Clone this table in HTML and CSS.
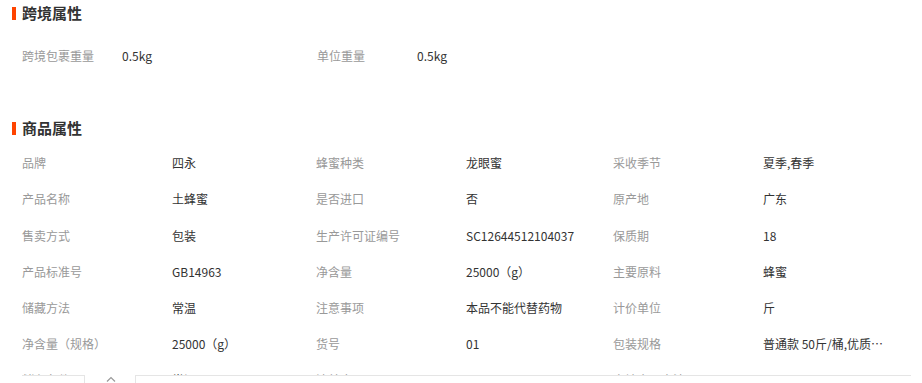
FILE: index.html
```html
<!DOCTYPE html>
<html lang="zh-CN">
<head>
<meta charset="utf-8">
<title>属性</title>
<link rel="stylesheet" href="styles.css">
</head>
<body>
<section class="sec sec-cross">
  <h2 class="sec-title">跨境属性</h2>
  <div class="grid grid-2">
    <div class="cell"><span class="lbl">跨境包裹重量</span><span class="val">0.5kg</span></div>
    <div class="cell"><span class="lbl">单位重量</span><span class="val">0.5kg</span></div>
  </div>
</section>
<section class="sec sec-goods">
  <h2 class="sec-title">商品属性</h2>
  <div class="grid grid-3">
    <div class="cell"><span class="lbl">品牌</span><span class="val">四永</span></div>
    <div class="cell"><span class="lbl">蜂蜜种类</span><span class="val">龙眼蜜</span></div>
    <div class="cell"><span class="lbl">采收季节</span><span class="val">夏季,春季</span></div>
    <div class="cell"><span class="lbl">产品名称</span><span class="val">土蜂蜜</span></div>
    <div class="cell"><span class="lbl">是否进口</span><span class="val">否</span></div>
    <div class="cell"><span class="lbl">原产地</span><span class="val">广东</span></div>
    <div class="cell"><span class="lbl">售卖方式</span><span class="val">包装</span></div>
    <div class="cell"><span class="lbl">生产许可证编号</span><span class="val">SC12644512104037</span></div>
    <div class="cell"><span class="lbl">保质期</span><span class="val">18</span></div>
    <div class="cell"><span class="lbl">产品标准号</span><span class="val">GB14963</span></div>
    <div class="cell"><span class="lbl">净含量</span><span class="val">25000（g）</span></div>
    <div class="cell"><span class="lbl">主要原料</span><span class="val">蜂蜜</span></div>
    <div class="cell"><span class="lbl">储藏方法</span><span class="val">常温</span></div>
    <div class="cell"><span class="lbl">注意事项</span><span class="val">本品不能代替药物</span></div>
    <div class="cell"><span class="lbl">计价单位</span><span class="val">斤</span></div>
    <div class="cell"><span class="lbl">净含量（规格）</span><span class="val">25000（g）</span></div>
    <div class="cell"><span class="lbl">货号</span><span class="val">01</span></div>
    <div class="cell"><span class="lbl">包装规格</span><span class="val val-clip">普通款 50斤/桶,优质款 50斤/桶</span></div>
    <div class="cell"><span class="lbl">储存条件</span><span class="val">常温</span></div>
    <div class="cell"><span class="lbl">波美度</span><span class="val">42°</span></div>
    <div class="cell"><span class="lbl">产地食用方法</span><span class="val">18</span></div>
  </div>
</section>
<div class="dock">
  <div class="dock-left"></div>
  <div class="dock-caret"><svg width="10" height="6" viewBox="0 0 10 6"><path d="M1 5.5 L5 1.5 L9 5.5" fill="none" stroke="#999" stroke-width="1.2"/></svg></div>
  <div class="dock-main"></div>
</div>
</body>
</html>
```

FILE: styles.css
```css
html, body {
  margin: 0;
  padding: 0;
  background: #fff;
}
body {
  font-family: "Noto Sans CJK SC", "Noto Sans", sans-serif;
  font-size: 12px;
  color: #333;
  width: 922px;
  height: 383px;
  overflow: hidden;
  position: relative;
}
.sec-title {
  margin: 0;
  height: 26px;
  line-height: 26px;
  font-size: 15px;
  font-weight: bold;
  color: #333;
  padding-left: 22px;
  position: relative;
}
.sec-title::before {
  content: "";
  position: absolute;
  left: 12px;
  top: 7px;
  width: 4px;
  height: 13px;
  background: #ff4400;
}
.sec-cross .grid { margin-top: 12px; }
.sec-goods { margin-top: 41px; }
.sec-goods .grid { margin-top: 4px; }
.grid {
  display: grid;
  padding-left: 22px;
}
.grid-2 { grid-template-columns: 295px 1fr; }
.grid-3 { grid-template-columns: 294px 297px 1fr; }
.cell {
  display: flex;
  height: 36.2px;
  line-height: 36px;
  white-space: nowrap;
}
.lbl {
  color: #999;
  flex: none;
}
.grid-2 .lbl { width: 100px; }
.grid-3 .lbl { width: 150px; }
.val { color: #333; }
.val-clip {
  max-width: 122px;
  overflow: hidden;
  text-overflow: ellipsis;
}
.dock {
  position: absolute;
  left: 0;
  top: 375px;
  width: 922px;
  height: 20px;
  display: flex;
}
.dock-left {
  margin-left: 22px;
  width: 62px;
  height: 20px;
  background: #fff;
  border-top: 1px solid #e5e5e5;
  border-right: 1px solid #e5e5e5;
}
.dock-caret {
  width: 50px;
  height: 21px;
  background: #fff;
  display: flex;
  justify-content: center;
  padding-top: 1px;
  box-sizing: border-box;
}
.dock-caret svg { margin-left: 2px; }
.dock-main {
  width: 775px;
  height: 20px;
  background: #fff;
  border-top: 1px solid #e5e5e5;
  border-left: 1px solid #e5e5e5;
}
```
